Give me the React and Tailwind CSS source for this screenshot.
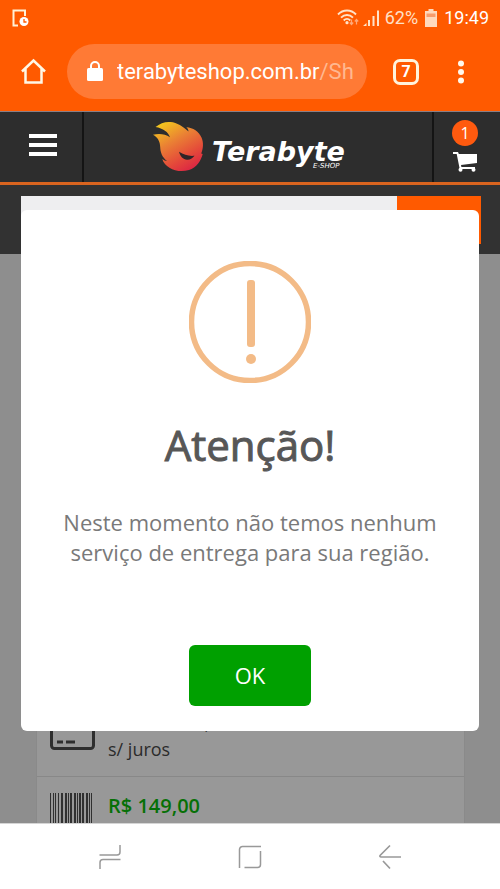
import React, { useState } from 'react';

const BARS = [
  [0, 1], [3, 1], [5, 1], [8, 1], [11, 2], [15, 2], [18, 1], [20, 2], [24, 2], [27, 1],
  [29, 2], [32, 2], [36, 2], [39, 1], [41, 1],
];

const StatusBar = () => (
  <div className="flex h-9 items-center justify-between pl-3 pr-[11px]">
    <svg width="18" height="18" viewBox="0 0 18 18" fill="none" aria-hidden="true">
      <path d="M13 7V1.500H1.500v15H6" stroke="#fff1d6" strokeWidth="2" />
      <circle cx="12" cy="12.500" r="4.500" fill="#fff" />
      <path d="M12 10v3h2.500" stroke="#ff5a00" strokeWidth="1.300" />
    </svg>
    <div className="flex items-center text-lg text-white">
      <svg className="mr-1" width="44" height="18" viewBox="0 0 44 18" fill="none" aria-hidden="true">
        <g stroke="#ffe3c9" strokeWidth="1.900">
          <path d="M1 5.500c5-5.300 13-5.300 18 0" />
          <path d="M4 8.700c3.500-3.600 8.500-3.600 12 0" />
          <path d="M6.700 11.500c2-2 4.600-2 6.600 0" />
        </g>
        <circle cx="10" cy="13.700" r="1.600" fill="#ffe3c9" />
        <path d="M14.500 10.500v5M12.800 13.500l1.700 2 1.700-2M19.500 15.500v-5M17.800 12.500l1.700-2 1.700 2" stroke="#ffa878" strokeWidth="1.200" />
        <path d="M26 17l3.500-3v3zM31 11h2v6h-2zM35.500 7h2v10h-2zM40 1.500h2V17h-2z" fill="#ffe3c9" />
      </svg>
      <span className="text-[#ffe0c8]">62%</span>
      <svg className="mx-[7px]" width="12" height="18" viewBox="0 0 12 18" aria-hidden="true">
        <path d="M3.500 0h5v2H12v16H0V2h3.500z" fill="#ffd9bd" />
        <path d="M1.500 4.500h9V8h-9z" fill="#f79c6c" />
      </svg>
      <span>19:49</span>
    </div>
  </div>
);

const BrowserBar = () => (
  <div className="flex items-center pb-3 pl-5 pr-[35px] pt-2">
    <button type="button" aria-label="Página inicial">
      <svg width="27" height="27" viewBox="0 0 27 27" fill="none" stroke="#fff8e6" strokeWidth="2.500">
        <path d="M2 13.500L13.500 2.500 25 13.500M5.500 11v13.500h16V11" />
      </svg>
    </button>
    <div className="ml-5 flex h-[55px] min-w-0 flex-1 items-center rounded-full bg-[#ff7a35] pl-5 pr-2">
      <svg className="shrink-0" width="16" height="21" viewBox="0 0 16 21" aria-hidden="true">
        <path d="M4 8V5a4 4 0 0 1 8 0v3" fill="none" stroke="#fff" strokeWidth="2" />
        <rect y="7" width="16" height="13" rx="1.500" fill="#fff" />
      </svg>
      <span className="ml-[14px] overflow-hidden whitespace-nowrap text-[22px] text-white">
        terabyteshop.com.br<span className="text-[#ffb890]">/Sh</span>
      </span>
    </div>
    <button
      type="button"
      aria-label="Abas abertas"
      className="ml-[26px] flex size-[26px] items-center justify-center rounded-[7px] border-[3px] border-[#fff3dc] text-base font-bold text-white"
    >
      7
    </button>
    <button type="button" aria-label="Mais opções" className="ml-[38px]">
      <svg width="8" height="24" viewBox="0 0 8 24" fill="#fff8ec">
        <circle cx="4" cy="3.500" r="3" />
        <circle cx="4" cy="12" r="3" />
        <circle cx="4" cy="20.500" r="3" />
      </svg>
    </button>
  </div>
);

const Logo = () => (
  <svg width="198" height="56" viewBox="151 120 198 56" role="img" aria-label="Terabyte E-Shop">
    <defs>
      <linearGradient id="flame" x1="0.150" y1="0" x2="0.750" y2="1">
        <stop offset="0" stopColor="#f4cc1c" />
        <stop offset="0.400" stopColor="#ea8034" />
        <stop offset="0.750" stopColor="#e4483a" />
        <stop offset="1" stopColor="#dc2444" />
      </linearGradient>
    </defs>
    <path
      d="M155.500 128C160 124.500 165 122.500 170.500 123C177 123.500 183 127.500 188.500 132.500C188.500 130.800 187.500 129.300 186.300 128.300C193 128.500 199 133 201.500 138.500C203.800 143.500 203.200 150 201.200 154.500L202.700 155C201 162 196.500 168.500 189 171C178 174.500 165 169.500 162.300 160C163.800 161.300 165.500 162 167 162C162 158 160.300 153 160.200 148C160 142.500 157.800 138.500 153 135.800C158.500 134.200 165 134.700 170 138.300C168.500 133 163 129.300 155.500 128Z"
      fill="url(#flame)"
    />
    <path d="M179 152.800C184 156 188.500 157.300 194.500 156.800C192 160 190 161 187 160.800C183 160.500 180.300 157.500 179 152.800Z" fill="#2d2528" />
    <text x="212" y="162" fill="#fff" className="font-['DejaVu_Sans'] text-[27px] font-bold italic">Terabyte</text>
    <text x="313" y="169" fill="#fff" className="font-['DejaVu_Sans'] text-[7px] italic">E-SHOP</text>
  </svg>
);

const SiteHeader = () => (
  <header className="flex h-[74px] items-stretch border-b-[3px] border-t border-b-[#d9641f] border-t-[#8a7f86] bg-[#2d2d2d]">
    <button
      type="button"
      aria-label="Menu"
      className="flex w-[84px] items-center justify-center border-r-2 border-[#141414] pb-1 pl-1"
    >
      <svg width="28" height="22" viewBox="0 0 28 22" fill="#fff">
        <path d="M0 0h28v4H0zM0 9h28v4H0zM0 18h28v4H0z" />
      </svg>
    </button>
    <a href="#inicio" className="flex flex-1 items-center justify-center pr-4">
      <Logo />
    </a>
    <a
      href="#carrinho"
      aria-label="Carrinho, 1 item"
      className="flex w-[68px] flex-col items-center gap-1.5 border-l-2 border-[#141414] pr-1 pt-2 font-['Open_Sans',sans-serif]"
    >
      <span className="flex size-[26px] items-center justify-center rounded-full bg-[#ff5a0f] text-base text-white">1</span>
      <svg width="24" height="20" viewBox="0 0 24 20" fill="#fff" aria-hidden="true">
        <path d="M0 0h5l.8 2H24v9L8 13l.4 2H22v2H6.700L3.700 2H0z" />
        <circle cx="7.500" cy="17.800" r="2" />
        <circle cx="20.500" cy="17.800" r="2" />
      </svg>
    </a>
  </header>
);

const Product = () => (
  <section className="ml-9 mr-[35px] flex flex-1 flex-col justify-end border-x border-[#8a8a8a] bg-[#989898] text-lg text-[#2b2b2b]">
    <div className="flex items-end border-b border-[#888] px-[13px] pb-3.5">
      <svg className="mb-3" width="45" height="34" viewBox="0 0 45 34" fill="none" stroke="#2e2e2e" aria-hidden="true">
        <rect x="1.500" y="1.500" width="42" height="31" rx="3" strokeWidth="3" />
        <path d="M1 10h43" strokeWidth="4" />
        <path d="M7 26h6M16 26h9" strokeWidth="3" />
      </svg>
      <p className="ml-[13px] leading-[26px]">
        6x de R$ 29,21
        <br />
        s/ juros
      </p>
    </div>
    <div className="flex items-end px-[13px] pt-4">
      <svg width="42" height="30" viewBox="0 0 42 30" fill="#303030" aria-hidden="true">
        {BARS.map(([x, w]) => (
          <rect key={x} x={x} width={w} height="30" />
        ))}
      </svg>
      <strong className="ml-4 pb-1 text-xl leading-[26px] font-semibold text-[#067006]">R$ 149,00</strong>
    </div>
  </section>
);

const AlertDialog = ({ onClose }) => (
  <div
    role="alertdialog"
    aria-labelledby="alert-title"
    aria-describedby="alert-text"
    className="absolute inset-x-[21px] top-[99px] flex flex-col items-center rounded-md bg-white px-8 pb-[25px] pt-[51px] text-center"
  >
    <svg width="122" height="122" viewBox="0 0 122 122" fill="#f3bb87" aria-hidden="true">
      <circle cx="61" cy="61" r="58.500" fill="none" stroke="#f3bb87" strokeWidth="5.500" />
      <rect x="58" y="19" width="8" height="67" rx="3" />
      <circle cx="62" cy="98" r="5" />
    </svg>
    <h2
      id="alert-title"
      className="mt-8 text-[42px] leading-[60px] font-normal text-[#575757] [-webkit-text-stroke:1px_#575757]"
    >
      Atenção!
    </h2>
    <p id="alert-text" className="mt-8 text-[22px] leading-[30px] text-[#797979]">
      Neste momento não temos nenhum serviço de entrega para sua região.
    </p>
    <button
      type="button"
      onClick={onClose}
      className="mt-[78px] h-[61px] w-[122px] rounded-md bg-[#00a000] text-[22px] text-white"
    >
      OK
    </button>
  </div>
);

const NavigationBar = () => (
  <nav className="flex h-[66px] items-center justify-center gap-[116px] border-t border-[#d5d5d5] bg-white">
    <button type="button" aria-label="Recentes">
      <svg width="24" height="26" viewBox="0 0 24 26" fill="none" stroke="#999" strokeWidth="1.500">
        <path d="M1.500 11H19a3 3 0 0 0 3-3V1M22.500 15.500H5a3 3 0 0 0-3 3V25" />
      </svg>
    </button>
    <button type="button" aria-label="Início">
      <svg width="24" height="24" viewBox="0 0 24 24" fill="none" stroke="#999" strokeWidth="1.500">
        <path d="M1.500 23V4.500a3 3 0 0 1 3-3H23M22.500 6v13.500a3 3 0 0 1-3 3H6.500" />
      </svg>
    </button>
    <button type="button" aria-label="Voltar">
      <svg width="24" height="26" viewBox="0 0 24 26" fill="none" stroke="#999" strokeWidth="1.700">
        <path d="M23 13H3q-2-.5-.5-2L12 1.500M5 17l7 7.500" />
      </svg>
    </button>
  </nav>
);

const App = () => {
  const [open, setOpen] = useState(true);

  return (
    <div className="flex min-h-screen flex-col bg-[#ff5a00] font-['Roboto',sans-serif]">
      <StatusBar />
      <BrowserBar />
      <main className="relative flex flex-1 flex-col bg-[#8e8e8e] font-['Open_Sans',sans-serif]">
        <SiteHeader />
        <form
          className="flex bg-[#323232] pb-2.5 pl-[21px] pr-[19px] pt-[11px]"
          onSubmit={(e) => e.preventDefault()}
        >
          <input type="search" aria-label="Buscar produtos" className="h-12 min-w-0 flex-1 bg-[#eeeef0] px-3" />
          <button type="submit" aria-label="Buscar" className="h-12 w-[84px] bg-[#ff5a00]" />
        </form>
        <Product />
        {open && <AlertDialog onClose={() => setOpen(false)} />}
      </main>
      <NavigationBar />
    </div>
  );
};

export default App;
